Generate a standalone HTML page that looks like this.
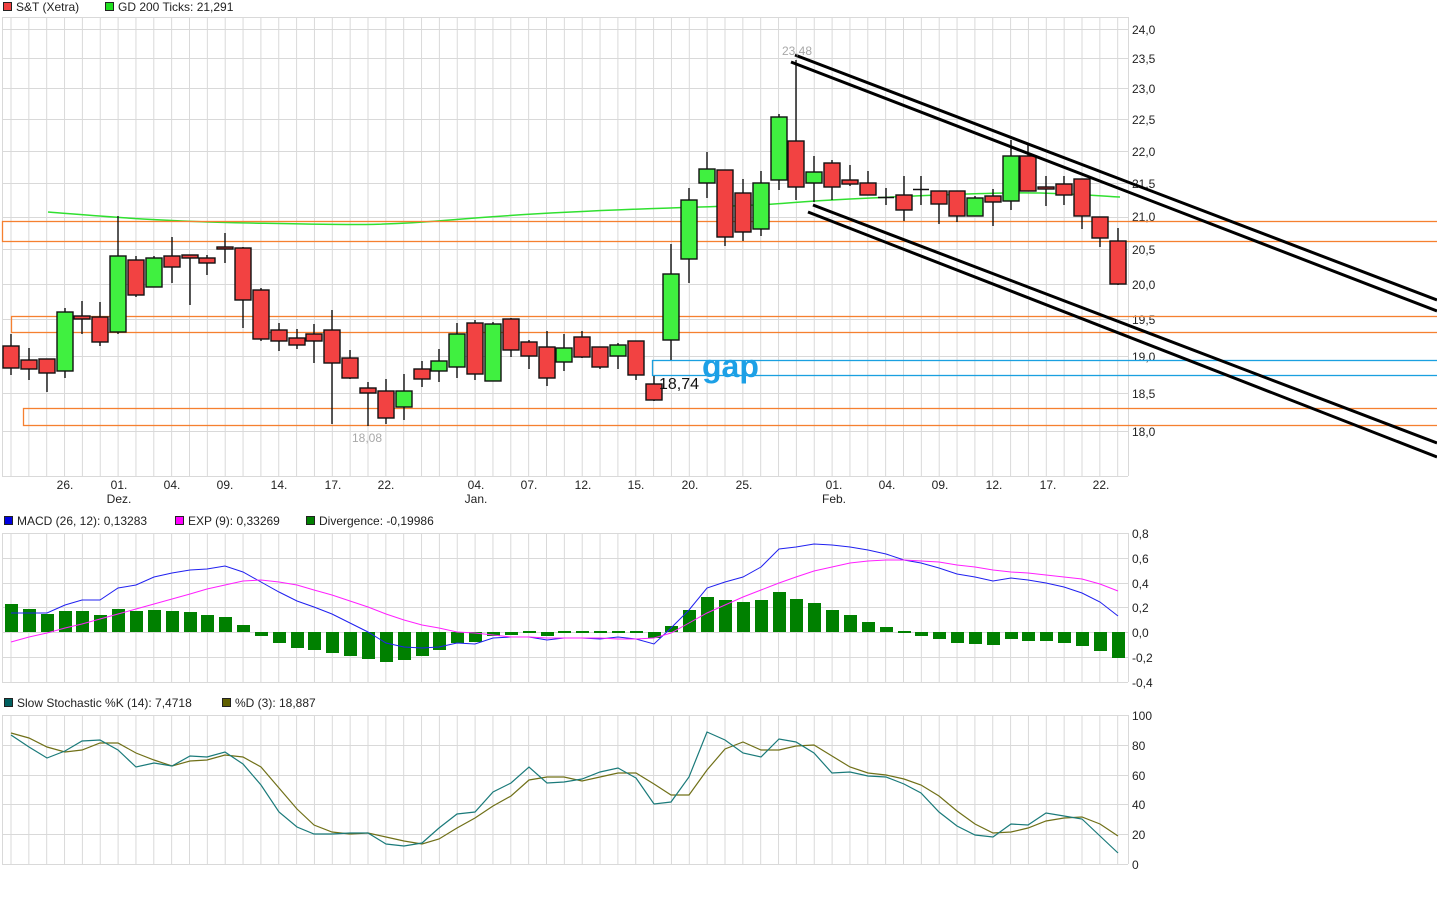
<!DOCTYPE html>
<html><head><meta charset="utf-8">
<style>
html,body{margin:0;padding:0;background:#fff;}
body{width:1437px;height:903px;overflow:hidden;}
svg{display:block;font-family:"Liberation Sans",sans-serif;}
</style></head><body>
<svg width="1437" height="903" viewBox="0 0 1437 903" xmlns="http://www.w3.org/2000/svg">
<defs>
<pattern id="vg" patternUnits="userSpaceOnUse" x="10.5" y="0" width="17.85" height="20">
<rect x="0" y="0" width="1" height="20" fill="#d9d9d9"/>
</pattern>
</defs>
<rect width="1437" height="903" fill="#fff"/>

<!-- legends -->
<g font-size="12" fill="#222">
<rect x="3.5" y="2.5" width="8" height="8" fill="#f04040" stroke="#222"/>
<text x="16" y="11">S&amp;T (Xetra)</text>
<rect x="105.5" y="2.5" width="8" height="8" fill="#20e020" stroke="#222"/>
<text x="118" y="11">GD 200 Ticks: 21,291</text>

<rect x="4.5" y="516.5" width="8" height="8" fill="#0000e0" stroke="#222"/>
<text x="17" y="525">MACD (26, 12): 0,13283</text>
<rect x="175.5" y="516.5" width="8" height="8" fill="#ff00ff" stroke="#222"/>
<text x="188" y="525">EXP (9): 0,33269</text>
<rect x="306.5" y="516.5" width="8" height="8" fill="#008000" stroke="#222"/>
<text x="319" y="525">Divergence: -0,19986</text>

<rect x="4.5" y="698.5" width="8" height="8" fill="#006060" stroke="#222"/>
<text x="17" y="707">Slow Stochastic %K (14): 7,4718</text>
<rect x="222.5" y="698.5" width="8" height="8" fill="#606000" stroke="#222"/>
<text x="235" y="707">%D (3): 18,887</text>
</g>

<!-- main grid -->
<rect x="2" y="17" width="1126" height="459" fill="url(#vg)"/>
<g stroke="#d9d9d9" stroke-width="1" shape-rendering="crispEdges">
<path d="M2 17.5H1128M2 29.5H1128M2 58.5H1128M2 88.5H1128M2 119.5H1128M2 151.5H1128M2 183.5H1128M2 217.5H1128M2 249.5H1128M2 284.5H1128M2 319.5H1128M2 356.5H1128M2 393.5H1128M2 431.5H1128M2 476.5H1128M2.5 17V476M1128.5 17V476"/>
</g>

<!-- MACD grid -->
<rect x="2" y="533" width="1126" height="149" fill="url(#vg)"/>
<g stroke="#d9d9d9" stroke-width="1" shape-rendering="crispEdges">
<path d="M2 533.5H1128M2 558.5H1128M2 583.5H1128M2 607.5H1128M2 632.5H1128M2 657.5H1128M2 682.5H1128M2.5 533V682M1128.5 533V682"/>
</g>

<!-- Stoch grid -->
<rect x="2" y="715" width="1126" height="149" fill="url(#vg)"/>
<g stroke="#d9d9d9" stroke-width="1" shape-rendering="crispEdges">
<path d="M2 715.5H1128M2 745.5H1128M2 775.5H1128M2 804.5H1128M2 834.5H1128M2 864.5H1128M2.5 715V864M1128.5 715V864"/>
</g>

<!-- axis labels -->
<g font-size="12" fill="#222">
<text x="1132" y="34">24,0</text><text x="1132" y="63">23,5</text><text x="1132" y="93">23,0</text>
<text x="1132" y="124">22,5</text><text x="1132" y="156">22,0</text><text x="1132" y="188">21,5</text>
<text x="1132" y="221">21,0</text><text x="1132" y="254">20,5</text><text x="1132" y="289">20,0</text>
<text x="1132" y="324">19,5</text><text x="1132" y="361">19,0</text><text x="1132" y="398">18,5</text>
<text x="1132" y="436">18,0</text>
<text x="1132" y="538">0,8</text><text x="1132" y="563">0,6</text><text x="1132" y="588">0,4</text>
<text x="1132" y="612">0,2</text><text x="1132" y="637">0,0</text><text x="1132" y="662">-0,2</text>
<text x="1132" y="687">-0,4</text>
<text x="1132" y="720">100</text><text x="1132" y="750">80</text><text x="1132" y="780">60</text>
<text x="1132" y="809">40</text><text x="1132" y="839">20</text><text x="1132" y="869">0</text>
</g>
<g font-size="12" fill="#222" text-anchor="middle">
<text x="65" y="489">26.</text><text x="119" y="489">01.</text><text x="119" y="503">Dez.</text>
<text x="172" y="489">04.</text><text x="225" y="489">09.</text><text x="279" y="489">14.</text>
<text x="333" y="489">17.</text><text x="386" y="489">22.</text><text x="476" y="489">04.</text>
<text x="476" y="503">Jan.</text><text x="529" y="489">07.</text><text x="583" y="489">12.</text>
<text x="636" y="489">15.</text><text x="690" y="489">20.</text><text x="744" y="489">25.</text>
<text x="834" y="489">01.</text><text x="834" y="503">Feb.</text><text x="887" y="489">04.</text>
<text x="940" y="489">09.</text><text x="994" y="489">12.</text><text x="1048" y="489">17.</text>
<text x="1101" y="489">22.</text>
</g>

<!-- GD200 -->
<path d="M48 212 C100 216,150 221,250 223 S380 226,450 220 S600 210,700 207 S770 203,850 199 S1000 192,1040 193 S1100 196,1120 197" fill="none" stroke="#30e030" stroke-width="1.5"/>

<!-- horizontal zones -->
<g fill="none" stroke-width="1.3">
<rect x="2.5" y="221.5" width="1440" height="20" stroke="#f58030"/>
<rect x="11.5" y="316.5" width="1440" height="16" stroke="#f58030"/>
<rect x="23.5" y="408.5" width="1440" height="17" stroke="#f58030"/>
<rect x="652.5" y="360.5" width="790" height="15" stroke="#1aa0e0"/>
</g>

<!-- candles -->
<g stroke="#111" stroke-width="1.4">
<path d="M11 334V375M29 348V380M47 359V392M65 308V378M82 301V334M100 302V346M118 216V334M136 256V297M154 256V287M172 237V283M190 255V305M207 255V275M225 233V263M243 247V328M261 288V341M279 323V351M297 329V349M314 324V363M332 310V424M350 350V379M368 382V426M386 379V424M404 374V420M422 361V387M439 349V382M457 323V378M475 320V380M493 322V381M511 318V357M529 340V369M547 331V386M564 334V371M582 331V358M600 347V369M618 343V369M636 341V380M654 376V401M671 244V360M689 188V283M707 152V198M725 170V246M743 179V241M761 171V236M779 114V190M796 60V200M814 156V202M832 160V200M850 165V186M868 171V195M886 188V205M904 176V221M921 176V205M939 191V224M957 191V222M975 196V216M993 189V226M1011 140V210M1028 145V191M1046 176V206M1064 176V205M1082 179V229M1100 217V247M1118 228V285"/>
<path d="M878 197.5H894M913 189.5H929" fill="none"/>
</g>
<g stroke="#111" stroke-width="1.4">
<g fill="#f24242">
<rect x="3" y="346" width="16" height="22"/><rect x="21" y="360" width="16" height="9"/>
<rect x="39" y="359" width="16" height="14"/><rect x="74" y="316" width="16" height="3"/>
<rect x="92" y="317" width="16" height="25"/><rect x="128" y="260" width="16" height="35"/>
<rect x="164" y="256" width="16" height="11"/><rect x="182" y="255" width="16" height="3"/>
<rect x="199" y="258" width="16" height="5"/><rect x="217" y="247" width="16" height="2"/>
<rect x="235" y="248" width="16" height="52"/><rect x="253" y="290" width="16" height="49"/>
<rect x="271" y="330" width="16" height="11"/><rect x="289" y="338" width="16" height="7"/>
<rect x="306" y="334" width="16" height="7"/><rect x="324" y="330" width="16" height="33"/>
<rect x="342" y="358" width="16" height="20"/><rect x="360" y="388" width="16" height="5"/>
<rect x="378" y="391" width="16" height="27"/><rect x="414" y="369" width="16" height="10"/>
<rect x="467" y="323" width="16" height="51"/><rect x="503" y="319" width="16" height="31"/>
<rect x="521" y="342" width="16" height="14"/><rect x="539" y="347" width="16" height="31"/>
<rect x="574" y="337" width="16" height="20"/><rect x="592" y="347" width="16" height="20"/>
<rect x="628" y="341" width="16" height="34"/><rect x="646" y="384" width="16" height="16"/>
<rect x="717" y="170" width="16" height="67"/><rect x="735" y="193" width="16" height="39"/>
<rect x="788" y="141" width="16" height="46"/><rect x="824" y="163" width="16" height="24"/>
<rect x="842" y="180" width="16" height="4"/><rect x="860" y="183" width="16" height="12"/>
<rect x="896" y="195" width="16" height="15"/><rect x="931" y="191" width="16" height="13"/>
<rect x="949" y="191" width="16" height="25"/><rect x="985" y="196" width="16" height="6"/>
<rect x="1020" y="156" width="16" height="35"/><rect x="1038" y="187" width="16" height="2"/>
<rect x="1056" y="184" width="16" height="11"/><rect x="1074" y="179" width="16" height="37"/>
<rect x="1092" y="217" width="16" height="21"/><rect x="1110" y="241" width="16" height="43"/>
</g>
<g fill="#40f040">
<rect x="57" y="312" width="16" height="59"/><rect x="110" y="256" width="16" height="76"/>
<rect x="146" y="258" width="16" height="29"/><rect x="396" y="391" width="16" height="16"/>
<rect x="431" y="361" width="16" height="10"/><rect x="449" y="334" width="16" height="33"/>
<rect x="485" y="324" width="16" height="57"/><rect x="556" y="348" width="16" height="14"/>
<rect x="610" y="345" width="16" height="11"/><rect x="663" y="274" width="16" height="66"/>
<rect x="681" y="200" width="16" height="59"/><rect x="699" y="169" width="16" height="14"/>
<rect x="753" y="183" width="16" height="46"/><rect x="771" y="117" width="16" height="63"/>
<rect x="806" y="172" width="16" height="11"/><rect x="967" y="198" width="16" height="18"/>
<rect x="1003" y="156" width="16" height="45"/>
</g>
</g>

<!-- trend lines -->
<g stroke="#000" stroke-width="3" fill="none">
<path d="M795 55L1437 300M791 62L1437 311M813 205L1437 443M808 212L1437 457"/>
</g>

<!-- annotations -->
<text x="782" y="55" font-size="12" fill="#a8a8a8">23,48</text>
<text x="352" y="442" font-size="12" fill="#a8a8a8">18,08</text>
<text x="659" y="389" font-size="16" fill="#111">18,74</text>
<text x="702" y="377" font-size="32" font-weight="bold" fill="#1ca0e6">gap</text>

<!-- MACD bars -->
<g fill="#008000">
<rect x="5" y="604" width="13" height="28"/><rect x="23" y="609" width="13" height="23"/>
<rect x="41" y="614" width="13" height="18"/><rect x="59" y="611" width="13" height="21"/>
<rect x="76" y="611" width="13" height="21"/><rect x="94" y="615" width="13" height="17"/>
<rect x="112" y="609" width="13" height="23"/><rect x="130" y="611" width="13" height="21"/>
<rect x="148" y="610" width="13" height="22"/><rect x="166" y="611" width="13" height="21"/>
<rect x="184" y="612" width="13" height="20"/><rect x="201" y="615" width="13" height="17"/>
<rect x="219" y="617" width="13" height="15"/><rect x="237" y="625" width="13" height="7"/>
<rect x="255" y="632" width="13" height="4"/><rect x="273" y="632" width="13" height="11"/>
<rect x="291" y="632" width="13" height="16"/><rect x="308" y="632" width="13" height="18"/>
<rect x="326" y="632" width="13" height="21"/><rect x="344" y="632" width="13" height="24"/>
<rect x="362" y="632" width="13" height="27"/><rect x="380" y="632" width="13" height="30"/>
<rect x="398" y="632" width="13" height="28"/><rect x="416" y="632" width="13" height="24"/>
<rect x="433" y="632" width="13" height="18"/><rect x="451" y="632" width="13" height="11"/>
<rect x="469" y="632" width="13" height="10"/><rect x="487" y="632" width="13" height="4"/>
<rect x="505" y="632" width="13" height="3"/><rect x="523" y="631" width="13" height="2"/>
<rect x="541" y="632" width="13" height="4"/><rect x="558" y="631" width="13" height="2"/>
<rect x="576" y="631" width="13" height="2"/><rect x="594" y="631" width="13" height="2"/>
<rect x="612" y="631" width="13" height="2"/><rect x="630" y="631" width="13" height="2"/>
<rect x="648" y="632" width="13" height="6"/><rect x="665" y="626" width="13" height="6"/>
<rect x="683" y="610" width="13" height="22"/><rect x="701" y="597" width="13" height="35"/>
<rect x="719" y="600" width="13" height="32"/><rect x="737" y="602" width="13" height="30"/>
<rect x="755" y="600" width="13" height="32"/><rect x="773" y="592" width="13" height="40"/>
<rect x="790" y="599" width="13" height="33"/><rect x="808" y="603" width="13" height="29"/>
<rect x="826" y="610" width="13" height="22"/><rect x="844" y="615" width="13" height="17"/>
<rect x="862" y="622" width="13" height="10"/><rect x="880" y="627" width="13" height="5"/>
<rect x="898" y="631" width="13" height="2"/><rect x="915" y="632" width="13" height="4"/>
<rect x="933" y="632" width="13" height="7"/><rect x="951" y="632" width="13" height="11"/>
<rect x="969" y="632" width="13" height="12"/><rect x="987" y="632" width="13" height="13"/>
<rect x="1005" y="632" width="13" height="7"/><rect x="1022" y="632" width="13" height="9"/>
<rect x="1040" y="632" width="13" height="9"/><rect x="1058" y="632" width="13" height="11"/>
<rect x="1076" y="632" width="13" height="14"/><rect x="1094" y="632" width="13" height="19"/>
<rect x="1112" y="632" width="13" height="26"/>
</g>
<polyline fill="none" stroke="#2020f0" stroke-width="1" points="11,613 29,613 47,613 65,605 82,600 100,600 118,588 136,585 154,577 172,573 190,570 207,569 225,566 243,572 261,582 279,592 297,601 314,607 332,614 350,623 368,632 386,643 404,647 422,648 439,647 457,643 475,644 493,638 511,637 529,637 547,640 564,638 582,638 600,639 618,637 636,639 654,644 671,628 689,610 707,588 725,582 743,577 761,567 779,549 796,547 814,544 832,545 850,547 868,550 886,554 904,560 921,563 939,568 957,574 975,577 993,581 1011,578 1028,580 1046,583 1064,587 1082,593 1100,602 1118,616"/>
<polyline fill="none" stroke="#ff20ff" stroke-width="1" points="11,642 29,637 47,633 65,628 82,624 100,619 118,614 136,609 154,604 172,599 190,594 207,589 225,585 243,581 261,580 279,582 297,585 314,590 332,595 350,601 368,607 386,614 404,620 422,625 439,628 457,632 475,633 493,635 511,637 529,637 547,638 564,638 582,638 600,638 618,639 636,639 654,638 671,633 689,623 707,613 725,605 743,597 761,590 779,583 796,577 814,571 832,567 850,563 868,561 886,560 904,560 921,561 939,562 957,565 975,567 993,570 1011,572 1028,573 1046,575 1064,577 1082,579 1100,584 1118,591"/>

<!-- Stochastic -->
<polyline fill="none" stroke="#707018" stroke-width="1.2" points="11,733 29,738 47,747 65,752 82,750 100,743 118,743 136,753 154,760 172,766 190,761 207,760 225,755 243,757 261,767 279,788 297,809 314,825 332,832 350,834 368,833 386,837 404,841 422,844 439,839 457,828 475,818 493,806 511,796 529,780 547,777 564,777 582,781 600,777 618,773 636,773 654,784 671,795 689,795 707,770 725,749 743,742 761,750 779,750 796,746 814,745 832,756 850,767 868,773 886,775 904,779 921,785 939,796 957,811 975,824 993,833 1011,832 1028,828 1046,821 1064,818 1082,817 1100,824 1118,836"/>
<polyline fill="none" stroke="#1a7a7a" stroke-width="1.2" points="11,735 29,747 47,758 65,751 82,741 100,740 118,750 136,767 154,763 172,766 190,756 207,757 225,752 243,764 261,785 279,812 297,827 314,834 332,834 350,833 368,833 386,844 404,846 422,843 439,828 457,814 475,812 493,792 511,783 529,767 547,783 564,782 582,779 600,772 618,768 636,778 654,804 671,802 689,777 707,732 725,740 743,753 761,757 779,739 796,742 814,753 832,773 850,772 868,776 886,777 904,784 921,793 939,812 957,826 975,835 993,837 1011,824 1028,825 1046,813 1064,816 1082,819 1100,836 1118,853"/>
</svg>
</body></html>
